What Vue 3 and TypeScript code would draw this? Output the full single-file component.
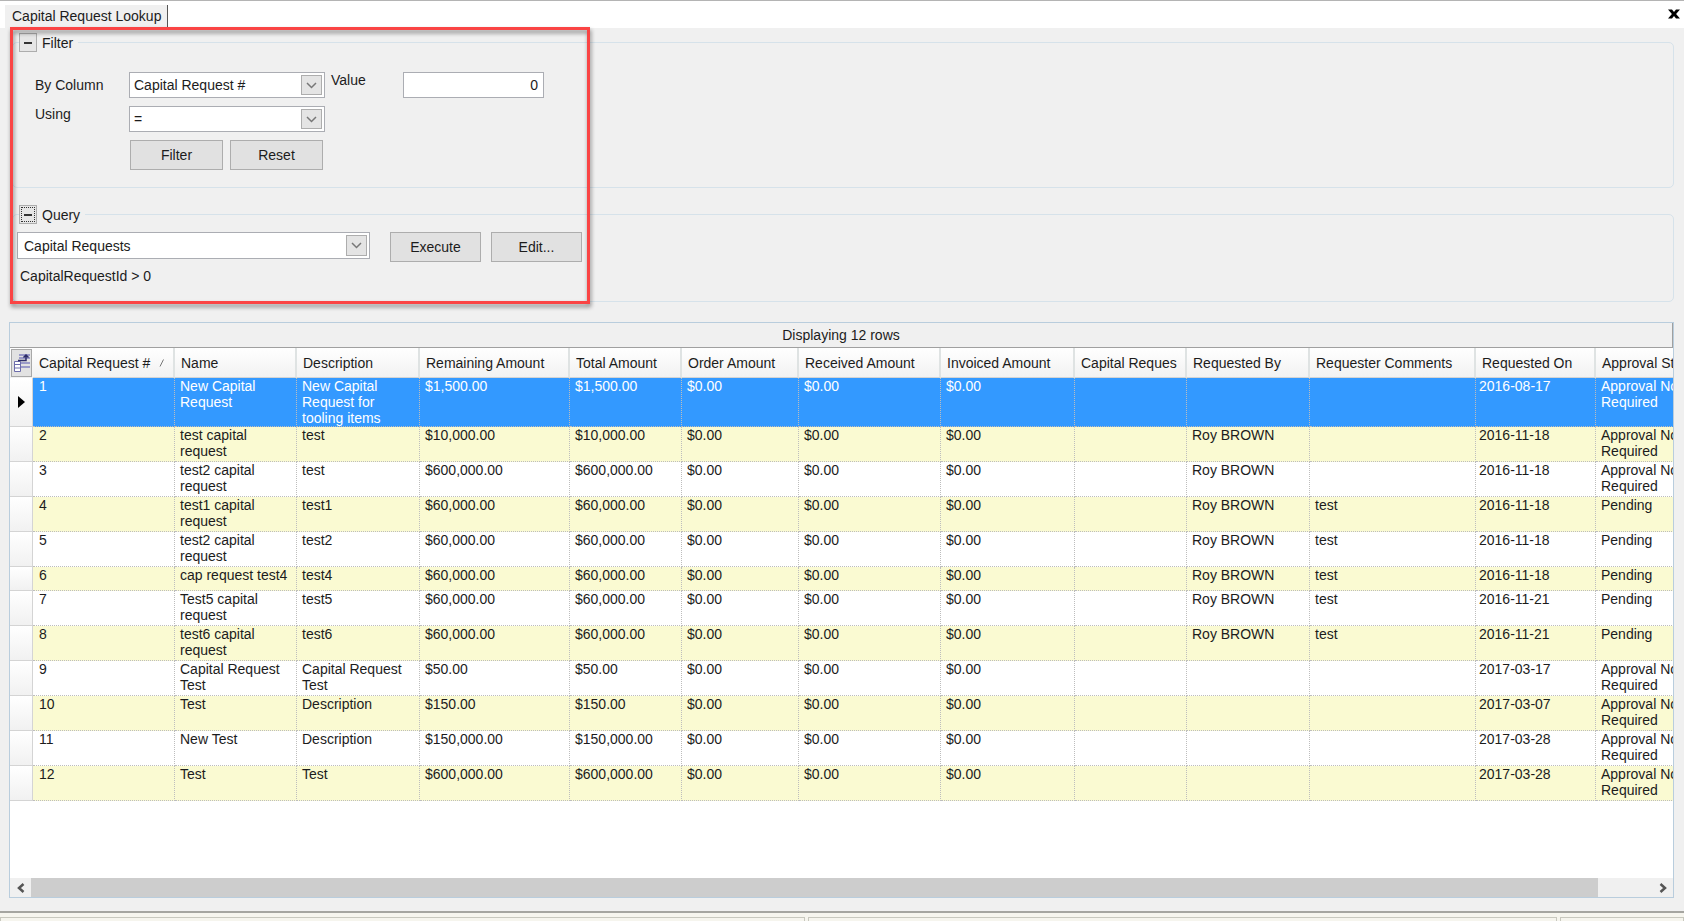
<script setup lang="ts">
import { ref } from 'vue'

interface Column {
  title: string
  width: number
  key: keyof Row
  sorted?: boolean
}

interface Row {
  id: number
  name: string
  description: string
  remaining: string
  total: string
  order: string
  received: string
  invoiced: string
  capital: string
  requestedBy: string
  comments: string
  requestedOn: string
  approval: string
}

const columns: Column[] = [
  { title: 'Capital Request #', width: 142, key: 'id', sorted: true },
  { title: 'Name', width: 122, key: 'name' },
  { title: 'Description', width: 123, key: 'description' },
  { title: 'Remaining Amount', width: 150, key: 'remaining' },
  { title: 'Total Amount', width: 112, key: 'total' },
  { title: 'Order Amount', width: 117, key: 'order' },
  { title: 'Received Amount', width: 142, key: 'received' },
  { title: 'Invoiced Amount', width: 134, key: 'invoiced' },
  { title: 'Capital Reques', width: 112, key: 'capital' },
  { title: 'Requested By', width: 123, key: 'requestedBy' },
  { title: 'Requester Comments', width: 166, key: 'comments' },
  { title: 'Requested On', width: 120, key: 'requestedOn' },
  { title: 'Approval Status', width: 122, key: 'approval' },
]

function row(id: number, name: string, description: string, amount: string, requestedBy: string, comments: string, requestedOn: string, approval: string): Row {
  return {
    id, name, description, remaining: amount, total: amount,
    order: '$0.00', received: '$0.00', invoiced: '$0.00', capital: '',
    requestedBy, comments, requestedOn, approval,
  }
}

const none = 'Approval Not Required'
const rows: Row[] = [
  row(1, 'New Capital Request', 'New Capital Request for tooling items', '$1,500.00', '', '', '2016-08-17', none),
  row(2, 'test capital request', 'test', '$10,000.00', 'Roy BROWN', '', '2016-11-18', none),
  row(3, 'test2 capital request', 'test', '$600,000.00', 'Roy BROWN', '', '2016-11-18', none),
  row(4, 'test1 capital request', 'test1', '$60,000.00', 'Roy BROWN', 'test', '2016-11-18', 'Pending'),
  row(5, 'test2 capital request', 'test2', '$60,000.00', 'Roy BROWN', 'test', '2016-11-18', 'Pending'),
  row(6, 'cap request test4', 'test4', '$60,000.00', 'Roy BROWN', 'test', '2016-11-18', 'Pending'),
  row(7, 'Test5 capital request', 'test5', '$60,000.00', 'Roy BROWN', 'test', '2016-11-21', 'Pending'),
  row(8, 'test6 capital request', 'test6', '$60,000.00', 'Roy BROWN', 'test', '2016-11-21', 'Pending'),
  row(9, 'Capital Request Test', 'Capital Request Test', '$50.00', '', '', '2017-03-17', none),
  row(10, 'Test', 'Description', '$150.00', '', '', '2017-03-07', none),
  row(11, 'New Test', 'Description', '$150,000.00', '', '', '2017-03-28', none),
  row(12, 'Test', 'Test', '$600,000.00', '', '', '2017-03-28', none),
]

const filterColumn = ref('Capital Request #')
const operator = ref('=')
const filterValue = ref('0')
const query = ref('Capital Requests')
const selected = ref(1)
const tableWidth = 23 + columns.reduce((sum, c) => sum + c.width, 0)
</script>

<template>
  <div class="page">
    <header class="tabs">
      <button type="button" class="tab">Capital Request Lookup</button>
      <button type="button" class="close" aria-label="Close">
        <svg width="12" height="10" viewBox="0 0 12 10"><path d="M0 0.5h4l2 2.4 2-2.4h4L8.1 5l3.9 4.5H8L6 7.1 4 9.500H0L3.9 5z" /></svg>
      </button>
    </header>

    <section class="criteria">
      <fieldset class="group filter">
        <legend>
          <button type="button" class="toggle" aria-label="Collapse filter"><svg width="8" height="2" viewBox="0 0 8 2"><path d="M0 0h8v2H0z" fill="#333" /></svg></button>
          Filter
        </legend>
        <div class="filter-grid">
          <label for="by-column">By Column</label>
          <div class="combo">
            <select id="by-column" v-model="filterColumn">
              <option v-for="c in columns" :key="c.key">{{ c.title }}</option>
            </select>
            <span class="drop"><svg width="11" height="7" viewBox="0 0 11 7"><path d="M1 1l4.500 4.500L10 1" /></svg></span>
          </div>
          <label for="filter-value" class="value-label">Value</label>
          <input id="filter-value" v-model="filterValue" type="text" class="value" />
          <label for="using" class="using-label">Using</label>
          <div class="combo">
            <select id="using" v-model="operator">
              <option>=</option>
              <option>&gt;</option>
              <option>&lt;</option>
            </select>
            <span class="drop"><svg width="11" height="7" viewBox="0 0 11 7"><path d="M1 1l4.500 4.500L10 1" /></svg></span>
          </div>
          <div class="actions">
            <button type="button" class="push">Filter</button>
            <button type="button" class="push">Reset</button>
          </div>
        </div>
      </fieldset>

      <fieldset class="group query">
        <legend>
          <button type="button" class="toggle focused" aria-label="Collapse query"><svg width="8" height="2" viewBox="0 0 8 2"><path d="M0 0h8v2H0z" fill="#333" /></svg></button>
          Query
        </legend>
        <div class="query-row">
          <div class="combo wide">
            <select v-model="query" aria-label="Query">
              <option>Capital Requests</option>
            </select>
            <span class="drop"><svg width="11" height="7" viewBox="0 0 11 7"><path d="M1 1l4.500 4.500L10 1" /></svg></span>
          </div>
          <button type="button" class="push">Execute</button>
          <button type="button" class="push">Edit...</button>
        </div>
        <p class="expression">CapitalRequestId &gt; 0</p>
      </fieldset>
      <div class="highlight"></div>
    </section>

    <section class="grid">
      <div class="caption">Displaying 12 rows</div>
      <div class="viewport">
        <table :style="{ width: tableWidth + 'px' }">
          <colgroup>
            <col class="gutter-col" />
            <col v-for="c in columns" :key="c.key" :style="{ width: c.width + 'px' }" />
          </colgroup>
          <thead>
            <tr>
              <th class="chooser">
                <button type="button" aria-label="Choose columns">
                  <svg width="18" height="20" viewBox="0 0 18 20">
                    <path d="M6 1h11v2H6zM6 4h11v2H6zM8 9h9v2H8zM8 13h9v2H8z" fill="#9a9ac8" />
                    <path d="M1.500 8.500h6v10h-6zM1.500 11.500h6M1.500 15h6" fill="#fff" stroke="#6c6cab" />
                    <path d="M5 7.500h8V2M10.500 4.500L13 2l2.500 2.500" fill="none" stroke="#2c2c68" stroke-width="1.500" />
                  </svg>
                </button>
              </th>
              <th v-for="c in columns" :key="c.key" scope="col">
                <span class="head">
                  {{ c.title }}
                  <svg v-if="c.sorted" width="6" height="8" viewBox="0 0 6 8"><path d="M1 7.500L4.500 0.500" stroke="#777" fill="none" /></svg>
                </span>
              </th>
            </tr>
          </thead>
          <tbody>
            <tr v-for="r in rows" :key="r.id" :class="{ selected: r.id === selected, short: r.id === 6 }" @click="selected = r.id">
              <td class="gutter">
                <svg v-if="r.id === selected" width="7" height="12" viewBox="0 0 7 12"><path d="M0 0l7 6-7 6z" /></svg>
              </td>
              <td v-for="c in columns" :key="c.key" :class="c.key">{{ r[c.key] }}</td>
            </tr>
          </tbody>
        </table>
      </div>
      <div class="scrollbar">
        <button type="button" aria-label="Scroll left"><svg width="8" height="10" viewBox="0 0 8 10"><path d="M6.500 1l-4.500 4 4.500 4" /></svg></button>
        <div class="track"><div class="thumb"></div></div>
        <button type="button" aria-label="Scroll right"><svg width="8" height="10" viewBox="0 0 8 10"><path d="M1.500 1l4.500 4-4.500 4" /></svg></button>
      </div>
    </section>

    <footer class="status">
      <div></div>
      <div></div>
      <div></div>
    </footer>
  </div>
</template>

<style>
body {
  background: #f0f0f0;
}
</style>

<style scoped>
* {
  box-sizing: border-box;
}
.page {
  display: flex;
  flex-direction: column;
  height: 100vh;
  overflow: hidden;
  border-top: 1px solid #b4b4b4;
  background: #f0f0f0;
  color: #1c1c1c;
  font: 14px/16px "Liberation Sans", Arial, sans-serif;
}
button,
input,
select {
  margin: 0;
  border-radius: 0;
  color: inherit;
  font: inherit;
}
.tabs {
  display: flex;
  flex: none;
  align-items: flex-start;
  justify-content: space-between;
  height: 27px;
  padding: 4px 4px 0 5px;
  background: #fff;
}
.tab {
  height: 23px;
  padding: 0 6px 2px 7px;
  border: 0;
  border-right: 1px solid #555;
  background: #f0f0f0;
}
.close {
  display: flex;
  padding: 4px 0;
  border: 0;
  background: none;
}
.criteria {
  position: relative;
  flex: none;
  padding: 5px 10px 0 12px;
}
.group {
  min-width: 0;
  margin: 0;
  padding: 0;
  border: 1px solid #d6e2ea;
  border-radius: 5px;
}
.group legend {
  display: flex;
  align-items: center;
  gap: 5px;
  height: 19px;
  margin-left: 6px;
  padding: 0 5px 0 0;
}
.toggle {
  display: flex;
  align-items: center;
  justify-content: center;
  width: 18px;
  height: 19px;
  padding: 0;
  border: 1px solid #adadad;
  background: #e6e6e6;
}
.focused {
  outline: 1px dotted #333;
  outline-offset: -3px;
}
.filter-grid {
  display: grid;
  grid-template-columns: 94px 196px 78px 141px;
  row-gap: 8px;
  align-items: center;
  padding: 20px 0 17px 22px;
}
.value-label {
  align-self: start;
  padding-left: 6px;
}
.using-label {
  align-self: start;
}
.combo {
  position: relative;
}
.combo select {
  width: 100%;
  height: 26px;
  padding: 0 28px 0 4px;
  border: 1px solid #abadb3;
  appearance: none;
  background: #fff;
}
.wide {
  width: 353px;
  margin-right: 10px;
}
.combo.wide select {
  height: 27px;
  padding-left: 6px;
}
.drop {
  position: absolute;
  top: 3px;
  right: 3px;
  bottom: 3px;
  display: flex;
  align-items: center;
  justify-content: center;
  width: 21px;
  border: 1px solid #adadad;
  background: #e4e4e4;
  pointer-events: none;
}
.drop path {
  fill: none;
  stroke: #777;
  stroke-width: 1.5;
}
.value {
  width: 100%;
  height: 26px;
  padding: 0 5px;
  border: 1px solid #abadb3;
  background: #fff;
  text-align: right;
}
.actions {
  display: flex;
  grid-column: 2;
  gap: 7px;
  padding: 0 1px;
}
.push {
  flex: none;
  width: 93px;
  height: 30px;
  padding: 0;
  border: 1px solid #adadad;
  background: #e1e1e1;
}
.query {
  margin-top: 17px;
}
.query-row {
  display: flex;
  align-items: flex-start;
  gap: 10px;
  padding: 8px 0 0 4px;
}
.query-row .push {
  width: 91px;
}
.expression {
  margin: 0;
  padding: 6px 0 17px 7px;
}
.highlight {
  position: absolute;
  top: -1px;
  bottom: -2px;
  left: 10px;
  width: 580px;
  border: 3px solid #fa4444;
  filter: drop-shadow(1px 3px 2px rgba(0, 0, 0, 0.45));
  pointer-events: none;
}
.grid {
  display: flex;
  flex: 1;
  flex-direction: column;
  min-height: 0;
  margin: 20px 10px 13px 9px;
  border: 1px solid #b9cddd;
  background: #fff;
}
.caption {
  flex: none;
  height: 25px;
  border-right: 1px solid #a0a0a0;
  border-bottom: 1px solid #a0a0a0;
  background: #f0f0f0;
  line-height: 25px;
  text-align: center;
}
.viewport {
  flex: 1;
  min-height: 0;
  overflow: hidden;
}
table {
  border-collapse: separate;
  border-spacing: 0;
  table-layout: fixed;
}
.gutter-col {
  width: 23px;
}
th {
  height: 30px;
  padding: 0 8px 0 6px;
  border-right: 2px solid #dfe3e3;
  border-bottom: 1px solid #d4d4d4;
  background: linear-gradient(#fff, #f2f2f2);
  font-weight: normal;
  text-align: left;
}
.head {
  display: flex;
  align-items: center;
  justify-content: space-between;
  white-space: nowrap;
}
.chooser {
  padding: 1px;
  border: 0;
}
.chooser button {
  display: flex;
  align-items: center;
  justify-content: center;
  width: 21px;
  height: 28px;
  padding: 0;
  border: 1px solid #a8a8a8;
  background: #e2e2e2;
}
td {
  height: 35px;
  padding: 0 16px 0 5px;
  border-right: 1px dotted #bdbdbd;
  border-bottom: 1px dotted #bdbdbd;
  vertical-align: top;
}
.short td {
  height: 24px;
}
tbody tr:nth-child(even) td {
  background: #fafad2;
}
tbody .selected td {
  background: #3399ff;
  color: #fff;
}
.name {
  padding-right: 4px;
}
.id {
  padding-left: 6px;
}
.requestedOn {
  padding-left: 3px;
}
tbody tr:nth-child(n) .gutter {
  padding: 0 0 0 8px;
  border-right: 1px solid #d4d4d4;
  border-bottom: 1px solid #d4d4d4;
  background: linear-gradient(#fff, #f1f1f1);
  color: #000;
  vertical-align: middle;
}
.gutter svg {
  display: block;
}
.scrollbar {
  display: flex;
  flex: none;
  height: 19px;
  background: #f0f0f0;
}
.scrollbar button {
  display: flex;
  align-items: center;
  justify-content: center;
  width: 21px;
  padding: 0;
  border: 0;
  background: none;
}
.scrollbar path {
  fill: none;
  stroke: #555;
  stroke-width: 2.5;
}
.track {
  display: grid;
  flex: 1;
  grid-template-columns: 29fr 1fr;
}
.thumb {
  background: #cdcdcd;
}
.status {
  display: grid;
  flex: none;
  grid-template-columns: 805fr 750fr 124fr;
  gap: 3px;
  height: 10px;
  padding-top: 4px;
  border-top: 2px solid #a5a5a0;
  background: #f6f5ee;
}
.status div {
  border: 1px solid #c8c8be;
  border-bottom: 0;
}
</style>
